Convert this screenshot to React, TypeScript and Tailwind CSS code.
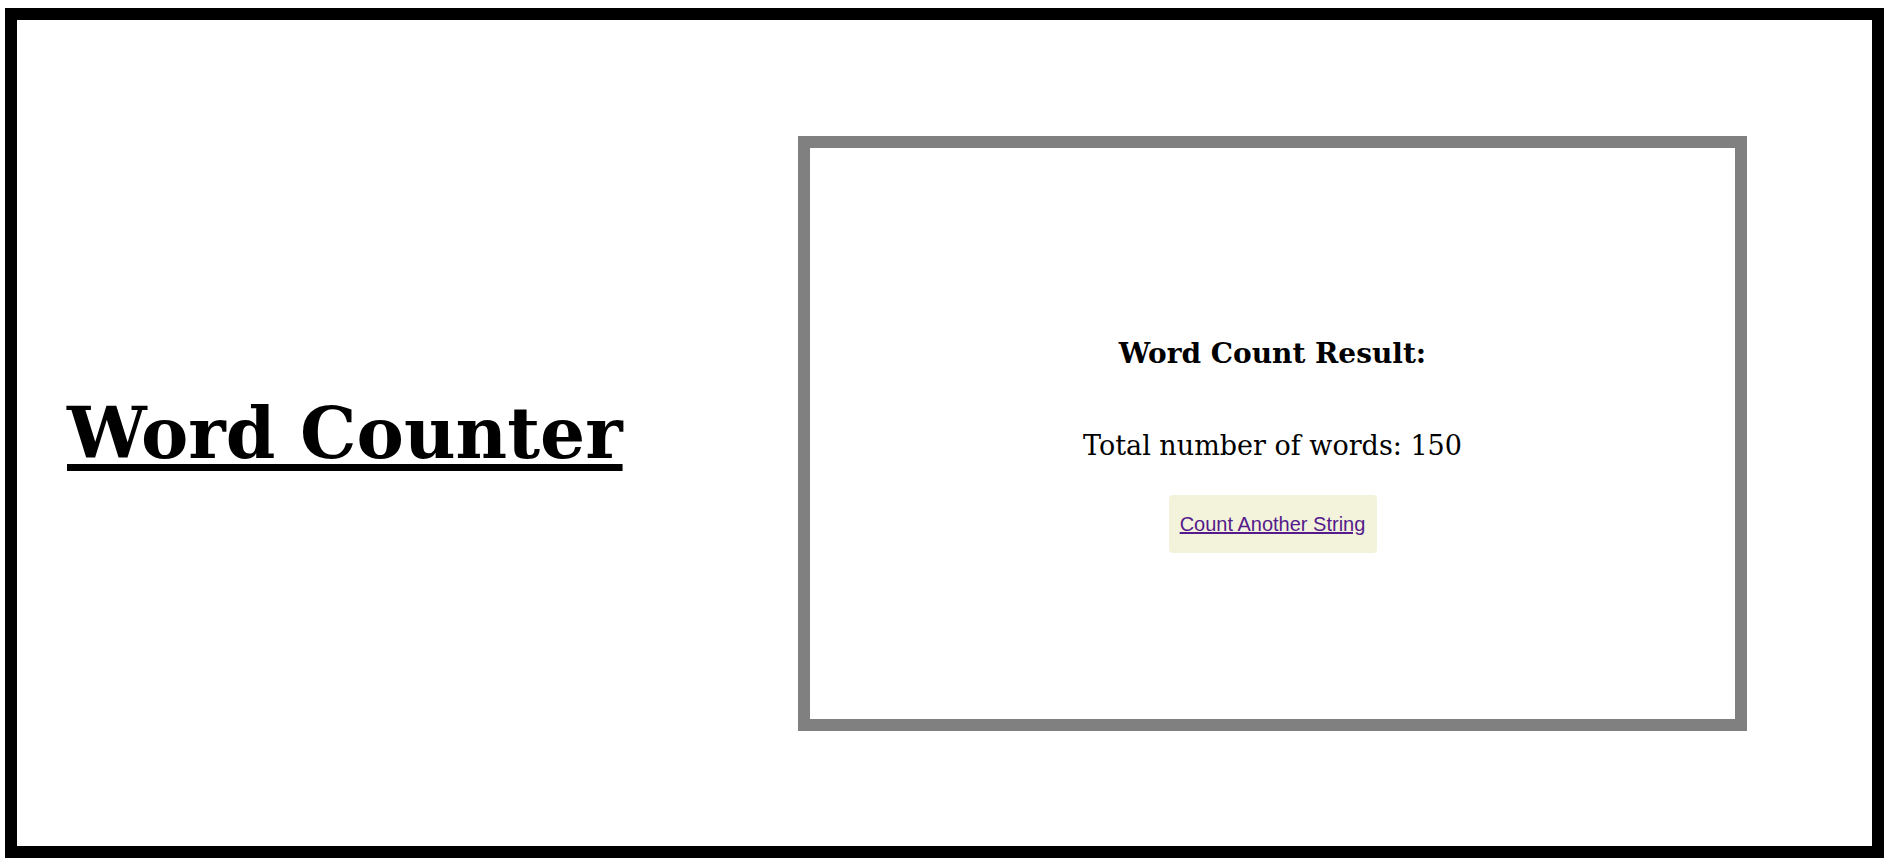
export default function App() {
  return (
    <div className="w-full h-[859px] bg-white pt-[8px] pl-[5px]" style={{ fontFamily: '"DejaVu Serif", serif' }}>
      <div className="w-[1879px] h-[850px] border-[12px] border-black flex items-center">
        <div className="w-[781px] flex items-center pl-[50px]">
          <h1 className="text-[71px] font-bold underline decoration-[7px] underline-offset-[6px] leading-none text-black">
            Word Counter
          </h1>
        </div>
        <div className="w-[949px] h-[595px] border-[12px] border-[#808080] pt-[26px] flex flex-col items-center justify-center">
          <h3 className="text-[28px] font-bold text-black leading-none">Word Count Result:</h3>
          <p className="text-[27px] text-black leading-none mt-[64px]">Total number of words: 150</p>
          <div className="mt-[36px] bg-[#f3f3dc] rounded-[4px] w-[208px] h-[58px] flex items-center justify-center">
            <a
              href="#"
              className="text-[20px] text-[#551a8b] underline"
              style={{ fontFamily: '"Liberation Sans", Arial, sans-serif' }}
            >
              Count Another String
            </a>
          </div>
        </div>
      </div>
    </div>
  )
}
